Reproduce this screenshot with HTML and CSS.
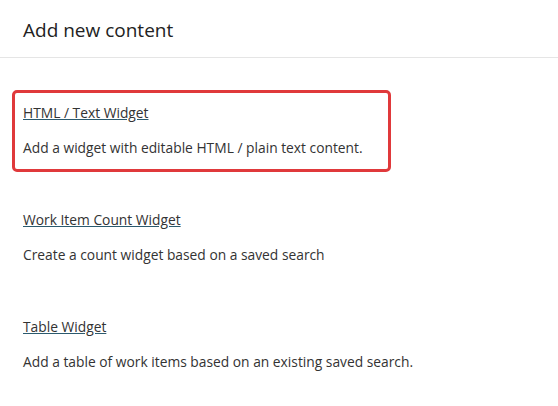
FILE: index.html
```html
<!DOCTYPE html>
<html>
<head>
<meta charset="utf-8">
<link rel="stylesheet" href="styles.css">
</head>
<body>
<div class="panel">
  <header class="panel-header">
    <h1 class="panel-title">Add new content</h1>
  </header>
  <ul class="content-list">
    <li class="content-item selected">
      <a class="item-link" href="#">HTML / Text Widget</a>
      <p class="item-desc">Add a widget with editable HTML / plain text content.</p>
    </li>
    <li class="content-item">
      <a class="item-link" href="#">Work Item Count Widget</a>
      <p class="item-desc">Create a count widget based on a saved search</p>
    </li>
    <li class="content-item">
      <a class="item-link" href="#">Table Widget</a>
      <p class="item-desc">Add a table of work items based on an existing saved search.</p>
    </li>
  </ul>
</div>
</body>
</html>
```
FILE: styles.css
```css
html, body {
  margin: 0;
  padding: 0;
  background: #ffffff;
}
.panel {
  width: 558px;
  height: 406px;
  font-family: "Open Sans", "Noto Sans", sans-serif;
  color: #333333;
}
.panel-header {
  height: 58px;
  border-bottom: 1px solid #e5e5e5;
  display: flex;
  align-items: center;
  padding: 0 23px;
  box-sizing: border-box;
}
.panel-title {
  margin: 0 0 -2px 0;
  font-size: 19px;
  font-weight: 400;
  color: #222222;
}
.content-list {
  list-style: none;
  margin: 0;
  padding: 32px 0 0 12px;
  display: flex;
  flex-direction: column;
  align-items: flex-start;
  gap: 25px;
}
.content-item {
  height: 82px;
  box-sizing: border-box;
  border: 3px solid transparent;
  border-radius: 5px;
  padding: 8px 8px 0 8px;
  white-space: nowrap;
}
.content-item.selected {
  width: 379px;
  border-color: #e0393b;
}
.item-link {
  display: inline-block;
  font-size: 13.8px;
  color: #333333;
  text-decoration: underline;
  text-decoration-color: #2b5a6e;
  line-height: 20px;
}
.item-desc {
  margin: 15px 0 0 0;
  font-size: 13.8px;
  line-height: 20px;
}
```
